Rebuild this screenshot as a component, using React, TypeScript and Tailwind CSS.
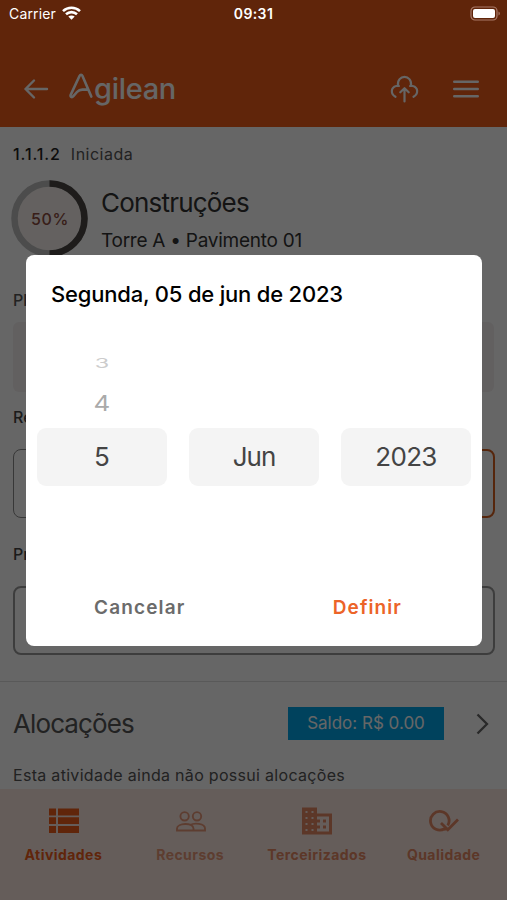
import type { ReactNode } from "react";

function StatusBar() {
  return (
    <div className="absolute inset-x-0 top-0 flex h-7 items-center justify-between pl-[9px] pr-[6px] text-white">
      <div className="flex w-20 items-center gap-[6px]">
        <span className="-mt-px text-[14px] tracking-[0.15px]">Carrier</span>
        <svg className="-mt-[3px]" width="19" height="14" viewBox="0 0 19 14" fill="none" stroke="currentColor" strokeWidth="2.6">
          <path d="M1 5.1C5.8.6 13.200.6 18 5.100" />
          <path d="M4 8.300C7.200 5.400 11.800 5.400 15 8.300" />
          <path d="M9.500 13.700 6.300 10.500C8 9 11 9 12.700 10.500Z" fill="currentColor" stroke="none" />
        </svg>
      </div>
      <span className="-ml-[3px] -mt-px text-[14px] font-semibold tracking-[0.4px]">09:31</span>
      <div className="flex w-20 items-center justify-end">
        <svg className="-mt-[2px]" width="31" height="15" viewBox="0 0 31 15" fill="none">
          <rect x="1" y="1" width="26" height="13" rx="4" stroke="#a97b69" strokeWidth="1.2" />
          <rect x="3" y="3" width="22" height="9" rx="2" fill="#fff" />
          <path d="M28.500 5.500c1.800.8 1.800 3.200 0 4Z" fill="#a97b69" />
        </svg>
      </div>
    </div>
  );
}

function Header() {
  return (
    <header className="flex h-[127px] shrink-0 items-end bg-[#f15c19] pb-[20px] pl-[23px] pr-[28px] text-white">
      <svg className="mb-[7px]" width="26" height="22" viewBox="0 0 26 22" fill="none" stroke="currentColor" strokeWidth="2.4" strokeLinecap="round" strokeLinejoin="round">
        <path d="M24 11H2.500M11 2.500 2.500 11 11 19.500" />
      </svg>
      <div className="ml-[18px] flex items-end">
        <svg className="mb-[7px]" width="27" height="28" viewBox="0 0 27 28" fill="none" stroke="currentColor" strokeWidth="2.600" strokeLinecap="round" strokeLinejoin="round">
          <path d="M24.300 24.600 15.500 4C14.800 2.400 13.300 2.400 12.500 4L3.800 22.600C2.900 24.800 4.800 26 6.400 24.200L10 20C11.600 18.200 13 17.600 15.300 17.600H20.500" />
        </svg>
        <span className="-mb-[1px] text-[29px] font-medium leading-[38px] tracking-[-0.3px]">gilean</span>
      </div>
      <div className="ml-auto flex items-center gap-[33px] pb-[4px]">
        <svg width="30" height="28" viewBox="0 0 30 28" fill="none" stroke="currentColor" strokeWidth="2.200" strokeLinecap="round" strokeLinejoin="round">
          <path d="M5.500 21.800C.5 19 .5 12.500 6.300 11H9M8 10.700C6.500-1 22.500-1 21 10.700M20 11H22.700C28.500 12.500 28.500 19 23.500 21.800M14.500 26.500V13.500M10.300 17.300 14.500 13.200 18.700 17.300" />
        </svg>
        <svg width="26" height="20" viewBox="0 0 26 20" fill="none" stroke="currentColor" strokeWidth="2.400" strokeLinecap="round">
          <path d="M1.200 2.700H24.800M1.200 10H24.800M1.200 17.300H24.800" />
        </svg>
      </div>
    </header>
  );
}

function Activity() {
  return (
    <section className="flex h-[128px] shrink-0 flex-col px-[13px] pt-[17px]">
      <div className="flex gap-[10px] text-[16px] leading-5">
        <span className="font-medium tracking-[0.9px] text-[#222]">1.1.1.2</span>
        <span className="tracking-[0.5px] text-[#555]">Iniciada</span>
      </div>
      <div className="-ml-[2px] mt-[16px] flex gap-[13px]">
        <div className="grid size-[78px] shrink-0 place-items-center">
          <svg className="col-start-1 row-start-1" width="78" height="78" viewBox="0 0 78 78" fill="none" strokeWidth="6.500">
            <circle cx="38.5" cy="38.500" r="35" fill="#f9f3ef" stroke="#bebebe" />
            <path d="M38.500 3.500A35 35 0 0 1 38.500 73.500" stroke="#4b4744" />
          </svg>
          <span className="col-start-1 row-start-1 text-[16px] font-medium tracking-[0.6px] text-[#8c4b40]">50%</span>
        </div>
        <div className="pt-[7px]">
          <h1 className="-ml-px text-[26px] leading-8 tracking-[-0.8px] text-[#333]">Construções</h1>
          <p className="-ml-px mt-[10px] text-[19px] leading-6 tracking-[-0.26px] text-[#333]">Torre A • Pavimento 01</p>
        </div>
      </div>
    </section>
  );
}

function Field({ label, children }: { label: string; children: ReactNode }) {
  return (
    <div className="h-[137px] text-[16px] font-medium leading-5 text-[#444]">
      <div className="mb-[22px]">{label}</div>
      {children}
    </div>
  );
}

function Details() {
  return (
    <section className="flex h-[427px] shrink-0 flex-col border-b border-[#dedede] px-[13px] pt-[35px]">
      <div className="h-[117px] text-[16px] font-medium leading-5 text-[#555]">
        <div className="mb-[12px]">Pl</div>
        <div className="h-[70px] rounded-md bg-[#f5f0f1]" />
      </div>
      <Field label="Re">
        <div className="flex gap-5">
          <div className="h-[69px] flex-1 rounded-lg border-[1.5px] border-[#8c8c8c]" />
          <div className="-mr-px h-[69px] flex-1 rounded-lg border-2 border-[#d65f20]" />
        </div>
      </Field>
      <Field label="Pr">
        <div className="-mr-px h-[69px] rounded-lg border-2 border-[#999]" />
      </Field>
    </section>
  );
}

function Allocations() {
  return (
    <section className="h-[107px] shrink-0 px-[13px] pt-[25px]">
      <div className="flex h-[33px] items-center">
        <h2 className="text-[26px] tracking-[-0.9px] text-[#555]">Alocações</h2>
        <span className="ml-auto flex h-[33px] w-[156px] items-center justify-center bg-[#00a5e8] text-[17px] text-white">Saldo: R$ 0.00</span>
        <svg className="ml-[32px] mr-[5px]" width="13" height="22" viewBox="0 0 13 22" fill="none" stroke="#666" strokeWidth="2.300">
          <path d="M1.500 1.500 11 11 1.500 20.500" />
        </svg>
      </div>
      <p className="mt-[25px] text-[16px] leading-5 tracking-[0.3px] text-[#555]">Esta atividade ainda não possui alocações</p>
    </section>
  );
}

const tabs = [
  {
    label: "Atividades",
    icon: (
      <path fill="currentColor" d="M0 1.500h7v7H0zM9 1.500h21v7H9zM0 10.300h7v6.800H0zM9 10.300h21v6.800H9zM0 19h7v7H0zM9 19h21v7H9z" />
    ),
  },
  {
    label: "Recursos",
    icon: (
      <g fill="none" stroke="currentColor" strokeWidth="1.900">
        <circle cx="8.600" cy="9.300" r="4.200" />
        <circle cx="21" cy="9.300" r="4.200" />
        <path d="M1 23.500v-2c0-5.500 16-6.500 16.500 0v2ZM14 18c4-2.300 15-2 15 3.500v2H17" />
      </g>
    ),
  },
  {
    label: "Terceirizados",
    icon: (
      <path fill="currentColor" fillRule="evenodd" d="M15 6.500V.5H0v27h30v-21H15ZM5.500 24h-2v-2h2v2Zm0-6h-2v-2h2v2Zm0-6h-2v-2h2v2Zm0-6h-2v-2h2v2Zm6 18h-2v-2h2v2Zm0-6h-2v-2h2v2Zm0-6h-2v-2h2v2Zm0-6h-2v-2h2v2Zm15.500 18.500H15v-3h3v-3h-3v-3h3v-3h-3v-3h12v15Zm-3-12h-3v3h3v-3Zm0 6h-3v3h3v-3Z" />
    ),
  },
  {
    label: "Qualidade",
    icon: (
      <g fill="none" stroke="currentColor" strokeWidth="2.800">
        <path d="M15.500 21.800A9.300 9.300 0 1 1 18.800 18.500" />
        <path d="m12 16 6.800 6.800L29 12.500M15 22h4" />
      </g>
    ),
  },
];

function TabBar() {
  return (
    <nav className="grid h-[111px] shrink-0 grid-cols-4 bg-[#fde8e2]">
      {tabs.map((tab, i) => (
        <div key={tab.label} className={i === 0 ? "flex flex-col items-center pt-[18px] text-[#f15c19]" : i === 1 ? "flex flex-col items-center pt-[18px] text-[#e99979]" : "flex flex-col items-center pt-[18px] text-[#e78a64]"}>
          <svg className="ml-px" width="30" height="28" viewBox="0 0 30 28">{tab.icon}</svg>
          <span className="mt-[10px] text-[14px] font-bold leading-5 tracking-[0.45px]">{tab.label}</span>
        </div>
      ))}
    </nav>
  );
}

function DateDialog() {
  return (
    <div role="dialog" className="absolute left-[26px] top-[255px] flex h-[390.5px] w-[456px] flex-col rounded-lg bg-white px-[11px] pt-[25px]">
      <h2 className="pl-[14px] text-[22px] font-medium leading-7 tracking-[-0.2px] text-black">Segunda, 05 de jun de 2023</h2>
      <div className="mt-[46px] grid grid-cols-3 gap-[22px] text-center text-[26px] leading-8 text-[#444]">
        <div>
          <div className="h-[33px]">
            <span className="block -translate-y-[7px] scale-x-90 scale-y-50 text-[#ccc]">3</span>
          </div>
          <div className="h-[41px]">
            <span className="block scale-y-[0.85] text-[#aaa]">4</span>
          </div>
          <div className="flex h-[58px] items-center justify-center rounded-[9px] bg-[#f4f4f4]">5</div>
        </div>
        <div className="flex h-[58px] items-center justify-center self-end rounded-[9px] bg-[#f4f4f4] tracking-[-1px]">Jun</div>
        <div className="flex h-[58px] items-center justify-center self-end rounded-[9px] bg-[#f4f4f4] tracking-[-0.7px]">2023</div>
      </div>
      <div className="mt-[110px] flex text-[19px] font-semibold leading-6">
        <button className="pl-[57px] tracking-[1.15px] text-[#6b6b6b]">Cancelar</button>
        <button className="ml-auto pr-[69px] tracking-[1.1px] text-[#ec6428]">Definir</button>
      </div>
    </div>
  );
}

export default function App() {
  return (
    <div className="relative flex h-[900px] w-[507px] flex-col overflow-hidden bg-white font-['Inter','Liberation_Sans',sans-serif]">
      <Header />
      <Activity />
      <Details />
      <Allocations />
      <TabBar />
      <div className="absolute inset-0 bg-black/60" />
      <StatusBar />
      <DateDialog />
    </div>
  );
}
